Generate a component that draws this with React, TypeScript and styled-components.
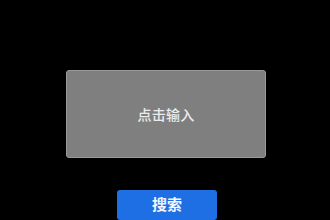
import React from 'react';
import styled, {createGlobalStyle} from 'styled-components';

const GlobalStyle = createGlobalStyle`
    html, body {
        margin: 0;
        padding: 0;
        background: #000;
    }

    body {
        font-family: "Noto Sans CJK SC", "Noto Sans", sans-serif;
    }
`;

export default function App() {
    return (
        <>
            <GlobalStyle/>
            <Screen>
                <InputBox>
                    <Placeholder>点击输入</Placeholder>
                </InputBox>
                <SearchButton>搜索</SearchButton>
            </Screen>
        </>
    );
}

const Screen = styled.div`
    width: 330px;
    height: 220px;
    overflow: hidden;
    background: #000;
    display: flex;
    flex-direction: column;
    align-items: center;
    padding-top: 70px;
    box-sizing: border-box;
    gap: 32px;
`;

const InputBox = styled.div`
    width: 200px;
    height: 90px;
    box-sizing: border-box;
    margin-left: 2px;
    background: #7f7f7f;
    border: 1px solid #9a9a9a;
    border-radius: 3px;
    display: flex;
    align-items: center;
    justify-content: center;
`;

const Placeholder = styled.span`
    color: #ececec;
    font-size: 14px;
    font-weight: 500;
    letter-spacing: 0.2px;
`;

const SearchButton = styled.button`
    flex-shrink: 0;
    width: 100px;
    height: 30px;
    margin-left: 4px;
    border: none;
    border-radius: 3px;
    background: #1d6fe3;
    color: #f2f6ff;
    font-family: "Noto Sans CJK SC", "Noto Sans", sans-serif;
    font-size: 15px;
    font-weight: 700;
    padding: 0 0 4px;
`;
